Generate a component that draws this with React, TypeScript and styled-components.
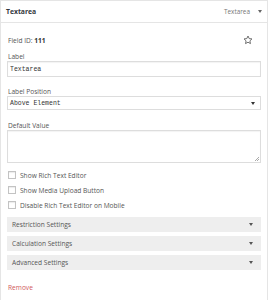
import { createGlobalStyle } from 'styled-components';
import styled from 'styled-components';

const GlobalStyle = createGlobalStyle`
  html, body {
    margin: 0;
    padding: 0;
    background: #fff;
  }
  body {
    font-family: "Open Sans", "Liberation Sans", sans-serif;
    color: #555;
    -webkit-font-smoothing: antialiased;
  }
`;

/** 外层面板 */
const Panel = styled.div`
  box-sizing: border-box;
  width: 268px;
  min-height: 310px;
  border: 1px solid #e5e5e5;
  border-bottom: none;
  background: #fff;
`;

const Header = styled.div`
  height: 21px;
  border-bottom: 1px solid #e5e5e5;
  display: flex;
  align-items: center;
  justify-content: space-between;
  padding: 0 5px 0 5px;
`;

const HeaderTitle = styled.span`
  font-size: 6.8px;
  font-weight: 700;
  color: #32373c;
`;

const HeaderType = styled.span`
  display: flex;
  align-items: center;
  gap: 8px;
  font-size: 6.4px;
  color: #777;
`;

const Body = styled.div`
  padding: 12px 6px 0 6px;
`;

const FieldIdRow = styled.div`
  height: 10px;
  display: flex;
  align-items: center;
  justify-content: space-between;
  padding: 0 8px 0 1px;
  font-size: 6.6px;
  color: #555;

  b {
    color: #333;
  }
`;

const Label = styled.label<{ $gap: number }>`
  display: block;
  margin-top: ${p => p.$gap}px;
  line-height: 9px;
  height: 9px;
  padding-left: 1px;
  font-size: 6.6px;
  color: #555;
`;

const TextInput = styled.input`
  box-sizing: border-box;
  display: block;
  width: 100%;
  height: 16px;
  margin: 0;
  padding: 0 2px;
  border: 1px solid #ddd;
  box-shadow: inset 0 1px 1px rgba(0, 0, 0, 0.05);
  font-family: "Liberation Mono", "DejaVu Sans Mono", monospace;
  font-size: 6.5px;
  color: #333;
  outline: none;
`;

const SelectBox = styled.div`
  box-sizing: border-box;
  height: 14px;
  display: flex;
  align-items: center;
  justify-content: space-between;
  padding: 0 5px 0 2px;
  border: 1px solid #ddd;
  font-family: "Liberation Mono", "DejaVu Sans Mono", monospace;
  font-size: 6.5px;
  color: #333;
`;

const TextArea = styled.textarea`
  box-sizing: border-box;
  display: block;
  width: 100%;
  height: 33px;
  margin: 0;
  border: 1px solid #ddd;
  box-shadow: inset 0 1px 1px rgba(0, 0, 0, 0.05);
  resize: none;
  outline: none;
  background:
    linear-gradient(135deg, transparent 45%, #aaa 45%, #aaa 55%, transparent 55%) right 1px bottom 1px / 4px 4px no-repeat,
    linear-gradient(135deg, transparent 45%, #aaa 45%, #aaa 55%, transparent 55%) right 1px bottom 1px / 2px 2px no-repeat,
    #fff;
`;

const CheckList = styled.div`
  margin-top: 8px;
  display: flex;
  flex-direction: column;
  gap: 7px;
`;

const CheckRow = styled.label`
  height: 8px;
  display: flex;
  align-items: center;
  gap: 4px;
  padding-left: 1px;
  font-size: 6.6px;
  color: #555;
`;

const CheckBox = styled.input`
  appearance: none;
  box-sizing: border-box;
  width: 8px;
  height: 8px;
  margin: 0;
  border: 1px solid #c3c3c3;
  background: #fff;
  box-shadow: inset 0 1px 1px rgba(0, 0, 0, 0.08);
`;

const Sections = styled.div`
  margin-top: 8px;
  display: flex;
  flex-direction: column;
  gap: 4px;
`;

const SectionBar = styled.div`
  height: 15px;
  display: flex;
  align-items: center;
  justify-content: space-between;
  padding: 0 8px 0 5px;
  background: #eee;
  font-size: 6.6px;
  color: #555;
`;

const RemoveLink = styled.a`
  display: block;
  margin-top: 13px;
  padding-left: 1px;
  line-height: 10px;
  font-size: 6.6px;
  color: #d0585a;
  text-decoration: none;
`;

/** 小三角 */
function Caret({ color = '#555' }: { color?: string }) {
  return (
    <svg width="4" height="3" viewBox="0 0 4 3">
      <path d="M0 0H4L2 3Z" fill={color} />
    </svg>
  );
}

/** 空心星 */
function StarIcon() {
  return (
    <svg width="10" height="10" viewBox="0 0 24 24" fill="none" stroke="#555" strokeWidth="2" strokeLinejoin="round">
      <path d="M12 2.5l2.9 6.1 6.6.8-4.9 4.6 1.3 6.6L12 17.3l-5.9 3.3 1.3-6.6-4.9-4.6 6.6-.8z" />
    </svg>
  );
}

export default function App() {
  const checks = ['Show Rich Text Editor', 'Show Media Upload Button', 'Disable Rich Text Editor on Mobile'];
  const sections = ['Restriction Settings', 'Calculation Settings', 'Advanced Settings'];

  return (
    <>
      <GlobalStyle />
      <Panel>
        <Header>
          <HeaderTitle>Textarea</HeaderTitle>
          <HeaderType>
            Textarea
            <Caret color="#666" />
          </HeaderType>
        </Header>
        <Body>
          <FieldIdRow>
            <span>
              Field ID: <b>111</b>
            </span>
            <StarIcon />
          </FieldIdRow>

          <Label $gap={7}>Label</Label>
          <TextInput value="Textarea" readOnly />

          <Label $gap={10}>Label Position</Label>
          <SelectBox>
            <span>Above Element</span>
            <Caret color="#333" />
          </SelectBox>

          <Label $gap={11}>Default Value</Label>
          <TextArea />

          <CheckList>
            {checks.map(text => (
              <CheckRow key={text}>
                <CheckBox type="checkbox" />
                {text}
              </CheckRow>
            ))}
          </CheckList>

          <Sections>
            {sections.map(text => (
              <SectionBar key={text}>
                {text}
                <Caret />
              </SectionBar>
            ))}
          </Sections>

          <RemoveLink href="#">Remove</RemoveLink>
        </Body>
      </Panel>
    </>
  );
}
